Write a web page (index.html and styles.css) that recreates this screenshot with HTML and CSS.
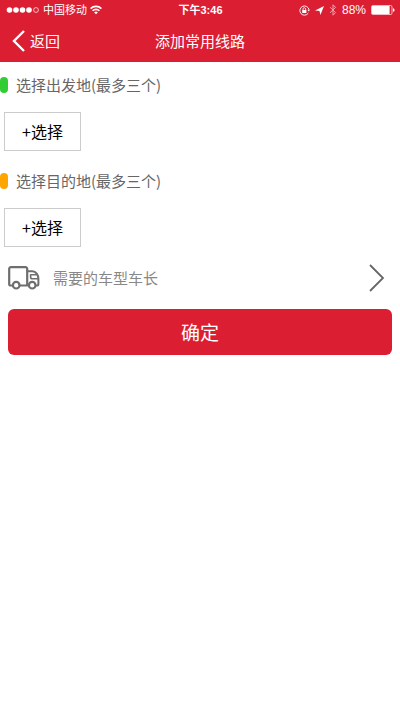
FILE: index.html
```html
<!DOCTYPE html>
<html lang="zh-CN">
<head>
<meta charset="utf-8">
<meta name="viewport" content="width=device-width, initial-scale=1">
<title>添加常用线路</title>
<link rel="stylesheet" href="styles.css">
</head>
<body>
<header class="top">
  <div class="status">
    <div class="status-left">
      <svg width="34" height="8" viewBox="0 0 34 8" aria-hidden="true">
        <g fill="#fff"><circle cx="3.5" cy="4" r="2.8"/><circle cx="10" cy="4" r="2.8"/><circle cx="16.500" cy="4" r="2.8"/><circle cx="23" cy="4" r="2.8"/></g>
        <circle cx="30" cy="4" r="2.4" fill="none" stroke="#fff" stroke-width=".7"/>
      </svg>
      <span>中国移动</span>
      <svg width="12" height="10" viewBox="0 0 12 10" fill="none" stroke="#fff" stroke-width="1.6" aria-hidden="true">
        <path d="M.6 3.600a7.600 7.600 0 0 1 10.800 0M2.600 5.800a4.800 4.800 0 0 1 6.800 0"/>
        <path d="M6 9.200 4.200 7.400a2.600 2.600 0 0 1 3.600 0z" fill="#fff" stroke="none"/>
      </svg>
    </div>
    <span class="clock">下午3:46</span>
    <div class="status-right">
      <svg width="11" height="11" viewBox="0 0 11 11" fill="none" stroke="#fff" aria-hidden="true">
        <path d="M9.300 8.100A4.600 4.600 0 1 1 10 4.800" stroke-width=".9"/>
        <path d="M8.500 4.700h2.500L9.800 6.600z" fill="#fff" stroke="none"/>
        <path d="M3.200 5h4.200v3H3.200z" fill="#fff" stroke="none"/>
        <path d="M4 5V4a1.300 1.300 0 0 1 2.600 0v1" stroke-width=".8"/>
      </svg>
      <svg width="9" height="9" viewBox="0 0 9 9" aria-hidden="true"><path d="M9 0 5.400 9 4.500 5 0 4.600z" fill="#fff"/></svg>
      <svg width="8" height="12" viewBox="0 0 8 12" fill="none" stroke="#f3a5b0" stroke-width="1" aria-hidden="true"><path d="M1 3.200 6.600 8.600 4 11.200V.8l2.600 2.600L1 8.800"/></svg>
      <span class="percent">88%</span>
      <svg width="24" height="10" viewBox="0 0 24 10" aria-hidden="true">
        <rect x=".5" y=".5" width="20.500" height="9" rx="1.4" fill="none" stroke="#fff" stroke-width=".7"/>
        <path d="M1 1h17.600v8H1z" fill="#fff"/>
        <path d="M22 3.200c2 .4 2 3.200 0 3.600z" fill="#fff"/>
      </svg>
    </div>
  </div>
  <nav class="nav">
    <a class="back" href="#">
      <svg width="14" height="22" viewBox="0 0 14 22" fill="none" stroke="#fff" stroke-width="2.4" aria-hidden="true"><path d="M12 1 2 11l10 10"/></svg>
      返回
    </a>
    <h1 class="title">添加常用线路</h1>
  </nav>
</header>
<main>
  <section>
    <h2 class="label"><span class="mark mark-from"></span>选择出发地(最多三个)</h2>
    <div class="picker"><button class="pick" type="button">+选择</button></div>
  </section>
  <section>
    <h2 class="label"><span class="mark mark-to"></span>选择目的地(最多三个)</h2>
    <div class="picker"><button class="pick" type="button">+选择</button></div>
  </section>
  <a class="vehicle" href="#">
    <svg width="32" height="24" viewBox="0 0 32 24" fill="none" stroke="#6e6e6e" stroke-width="2.2" stroke-linejoin="round" stroke-linecap="round" aria-hidden="true">
      <path d="M4.400 19.500H2.800A1.600 1.600 0 0 1 1.200 17.900V2.800A1.600 1.600 0 0 1 2.800 1.200H17.600a1.600 1.600 0 0 1 1.600 1.600V19.500H12"/>
      <path d="M19.600 5.200h4.800c3.600 0 6 4 6 7.600v5.100A1.600 1.600 0 0 1 28.800 19.500" stroke-width="2"/>
      <path d="M30 12.800h-5.600a1.800 1.800 0 0 1-1.800-1.800V8.800h5.600" stroke-width="1.6"/>
      <circle cx="8.200" cy="19.200" r="3.300" fill="#fff"/>
      <circle cx="24.200" cy="19.200" r="3.300" fill="#fff"/>
    </svg>
    <span class="vehicle-text">需要的车型车长</span>
    <svg width="16" height="28" viewBox="0 0 16 28" fill="none" stroke="#666" stroke-width="1.8" aria-hidden="true"><path d="M1 1l13 13L1 27"/></svg>
  </a>
  <button class="confirm" type="button">确定</button>
</main>
</body>
</html>
```
FILE: styles.css
```css
* {
  box-sizing: border-box;
}

body {
  margin: 0;
  background: #fff;
  color: #666;
  font-family: "Noto Sans CJK SC", "Liberation Sans", sans-serif;
  font-size: 15px;
}

svg {
  display: block;
  flex: none;
}

.top {
  background: #dc1e32;
  color: #fff;
}

.status {
  display: grid;
  grid-template-columns: 1fr auto 1fr;
  align-items: center;
  height: 20px;
  padding: 0 5px 0 6px;
  font-family: "Liberation Sans", "Noto Sans CJK SC", sans-serif;
  font-size: 11px;
  line-height: 20px;
}

.status-left,
.status-right {
  display: flex;
  align-items: center;
}

.status-left {
  gap: 3px;
}

.status-right {
  gap: 5px;
  justify-content: flex-end;
}

.clock {
  font-weight: bold;
}

.percent {
  font-size: 12px;
}

.nav {
  display: grid;
  grid-template-columns: 1fr auto 1fr;
  align-items: center;
  height: 42px;
  padding: 0 12px;
  line-height: 22px;
}

.back {
  display: flex;
  align-items: center;
  gap: 4px;
  color: #fff;
  text-decoration: none;
}

.title {
  margin: 0;
  font-size: 15px;
  font-weight: normal;
}

.label {
  display: flex;
  align-items: center;
  gap: 8px;
  height: 48px;
  margin: 0;
  padding-bottom: 2px;
  font-size: 15px;
  font-weight: normal;
  line-height: 20px;
}

.mark {
  width: 8px;
  height: 16px;
  border-radius: 4px;
}

.mark-from {
  background: #32cd32;
}

.mark-to {
  background: #ffa500;
}

.picker {
  height: 48px;
  padding: 2px 4px;
}

.pick {
  height: 39px;
  padding: 0 17px 2px;
  border: 1px solid #ccc;
  background: #fff;
  color: #000;
  font-family: inherit;
  font-size: 16px;
}

.vehicle {
  display: flex;
  align-items: center;
  height: 48px;
  padding: 0 15px 0 8px;
  color: #888;
  text-decoration: none;
}

.vehicle-text {
  flex: 1;
  margin-left: 13px;
  padding-bottom: 2px;
}

.confirm {
  display: block;
  width: calc(100% - 16px);
  height: 46px;
  margin: 7px 8px;
  padding: 0 0 2px;
  border: 0;
  border-radius: 6px;
  background: #dc1e32;
  color: #fff;
  font-family: inherit;
  font-size: 19px;
}
```
